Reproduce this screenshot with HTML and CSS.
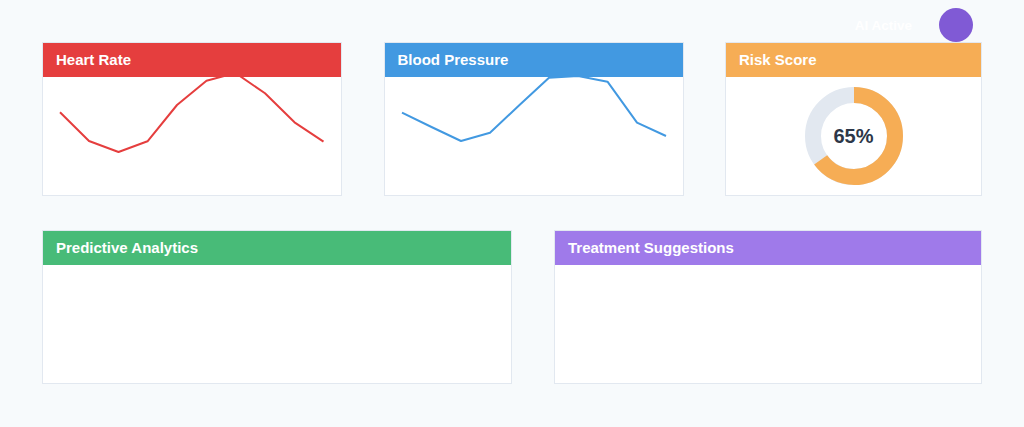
FILE: index.html
```html
<!DOCTYPE html>
<html lang="en">
<head>
<meta charset="utf-8">
<title>AI Health Dashboard</title>
<link rel="stylesheet" href="styles.css">
</head>
<body>
<div class="status">
  <span class="status-text">AI Active</span>
  <span class="status-dot"></span>
</div>
<main class="dashboard">
  <section class="row row-top">
    <div class="card">
      <div class="card-head head-red">Heart Rate</div>
      <div class="card-body">
        <svg class="chart" viewBox="0 0 298 118" width="298" height="118">
          <polyline class="line line-red" points="17,35.3 46,64 75.5,75 104.5,64.3 134,28 163.5,3.7 192.5,-4 222,16.3 251.5,45.3 280.5,64.7"/>
        </svg>
      </div>
    </div>
    <div class="card">
      <div class="card-head head-blue">Blood Pressure</div>
      <div class="card-body">
        <svg class="chart" viewBox="0 0 298 118" width="298" height="118">
          <polyline class="line line-blue" points="17,35.7 46.5,50 76,64 105,55.7 134.5,28 164,0.7 193,-1 222.5,4.7 252,45.7 281,59"/>
        </svg>
      </div>
    </div>
    <div class="card">
      <div class="card-head head-orange">Risk Score</div>
      <div class="card-body body-center">
        <div class="donut">
          <svg viewBox="0 0 98 98" width="98" height="98">
            <circle class="ring-bg" cx="49" cy="49" r="41"/>
            <circle class="ring-fg" cx="49" cy="49" r="41" transform="rotate(-90 49 49)"/>
          </svg>
          <span class="donut-label">65%</span>
        </div>
      </div>
    </div>
  </section>
  <section class="row row-bottom">
    <div class="card">
      <div class="card-head head-green">Predictive Analytics</div>
      <div class="card-body"></div>
    </div>
    <div class="card">
      <div class="card-head head-purple">Treatment Suggestions</div>
      <div class="card-body"></div>
    </div>
  </section>
</main>
</body>
</html>
```

FILE: styles.css
```css
* { box-sizing: border-box; }

html, body {
  margin: 0;
  padding: 0;
  background: #f7fafc;
  font-family: "Liberation Sans", Arial, sans-serif;
}

.status {
  position: absolute;
  top: 8px;
  right: 51px;
  display: flex;
  align-items: center;
  gap: 27px;
}

.status-text {
  color: #ffffff;
  font-weight: bold;
  font-size: 13.5px;
}

.status-dot {
  width: 34px;
  height: 34px;
  border-radius: 50%;
  background: #805ad5;
}

.dashboard {
  padding: 42px 42px 0 42px;
  display: flex;
  flex-direction: column;
  gap: 34px;
}

.row {
  display: grid;
}

.row-top {
  grid-template-columns: 300px 300px 1fr;
  column-gap: 41.5px;
}

.row-bottom {
  grid-template-columns: 470px 1fr;
  column-gap: 42px;
}

.card {
  background: #ffffff;
  border: 1px solid #e2e8f0;
  height: 154px;
  display: flex;
  flex-direction: column;
}

.card-head {
  height: 34px;
  flex: none;
  display: flex;
  align-items: center;
  padding: 0 13px 2px 13px;
  color: #ffffff;
  font-weight: bold;
  font-size: 15px;
  position: relative;
  z-index: 1;
}

.head-red { background: #e53e3e; }
.head-blue { background: #4299e1; }
.head-orange { background: #f6ad55; }
.head-green { background: #48bb78; }
.head-purple { background: #9f7aea; }

.card-body {
  flex: 1;
  position: relative;
}

.body-center {
  display: flex;
  align-items: center;
  justify-content: center;
}

.chart {
  display: block;
  overflow: hidden;
}

.line {
  fill: none;
  stroke-width: 2;
  stroke-linejoin: round;
}

.line-red { stroke: #e53e3e; }
.line-blue { stroke: #4299e1; }

.donut {
  position: relative;
  width: 98px;
  height: 98px;
}

.donut svg { display: block; }

.ring-bg {
  fill: none;
  stroke: #e2e8f0;
  stroke-width: 16;
}

.ring-fg {
  fill: none;
  stroke: #f6ad55;
  stroke-width: 16;
  stroke-dasharray: 167.45 257.61;
}

.donut-label {
  position: absolute;
  inset: 0;
  display: flex;
  align-items: center;
  justify-content: center;
  font-size: 20px;
  font-weight: bold;
  color: #2d3748;
}
```
